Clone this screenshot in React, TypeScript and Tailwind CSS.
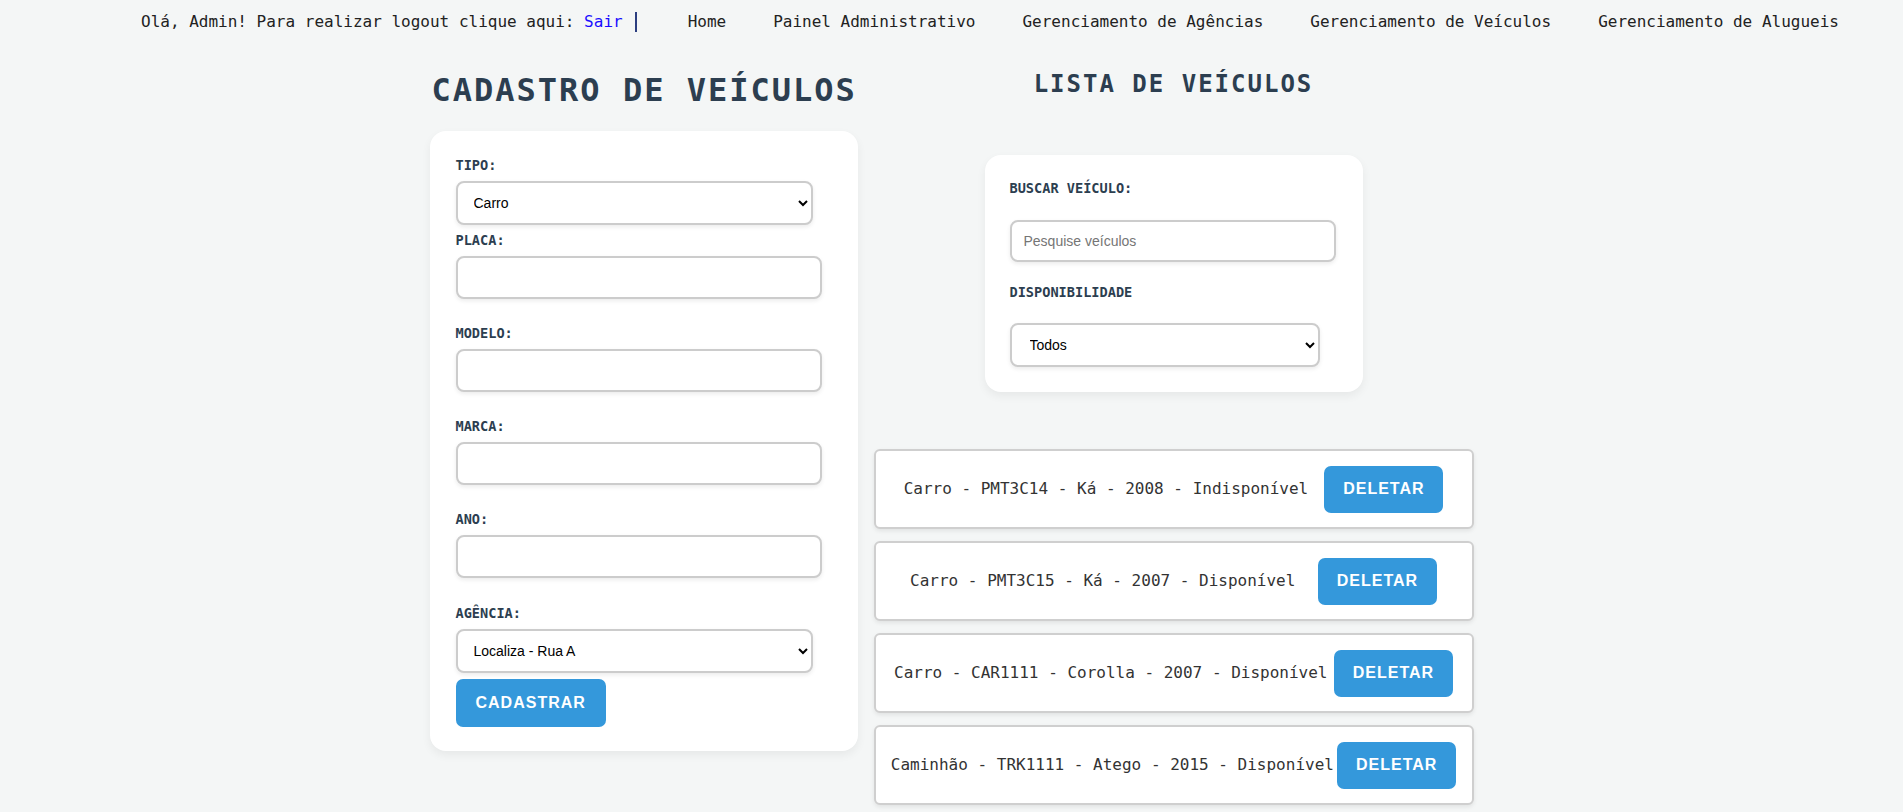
import React from "react";

const mono = "font-['DejaVu_Sans_Mono','Liberation_Mono',monospace]";
const sans = "font-['Liberation_Sans',Arial,sans-serif]";

const navLinks = ["Home", "Painel Administrativo", "Gerenciamento de Agências", "Gerenciamento de Veículos", "Gerenciamento de Alugueis"];

const veiculos = [
  "Carro - PMT3C14 - Ká - 2008 - Indisponível",
  "Carro - PMT3C15 - Ká - 2007 - Disponível",
  "Carro - CAR1111 - Corolla - 2007 - Disponível",
  "Caminhão - TRK1111 - Atego - 2015 - Disponível",
];

const labelCls = `${mono} block text-[13.6px] leading-4 font-bold text-[#2c3e50]`;
const boxCls = `${sans} block rounded-lg border-2 border-[#cccccc] bg-white text-[14px] text-black shadow-[0_2px_4px_rgba(0,0,0,0.08)] outline-none`;

function Field({ label, last }: { label: string; last?: boolean }) {
  return (
    <div className={last ? "" : "mb-[26px]"}>
      <label className={`${labelCls} mb-2`}>{label}</label>
      <input type="text" className={`${boxCls} h-[43px] w-[366px] px-3`} />
    </div>
  );
}

export default function App() {
  return (
    <div className={`${mono} min-h-[812px] bg-[#f4f6f6] text-[#222]`}>
      <nav className="flex h-[44px] items-center pl-[141px] text-[16px]">
        <span className="whitespace-pre">
          Olá, Admin! Para realizar logout clique aqui: <a className="text-[#1a0dff]">Sair</a>
        </span>
        <span className="ml-[12px] inline-block h-[20px] w-[2px] bg-[#2c3e80]"></span>
        <div className="ml-[51px] flex gap-[47px]">
          {navLinks.map((l) => (
            <a key={l} className="whitespace-nowrap text-[#222]">
              {l}
            </a>
          ))}
        </div>
      </nav>

      <main className="flex items-start justify-center gap-4 pt-[24px]">
        <section className="w-[428px]">
          <h1 className="mt-[2px] pl-[2px] text-[32px] leading-[40px] font-bold tracking-[2px] whitespace-nowrap text-[#2c3e50]">CADASTRO DE VEÍCULOS</h1>
          <div className="mt-[21px] rounded-2xl bg-white pt-[26px] pr-[25px] pb-[24px] pl-[26px] shadow-[0_4px_10px_rgba(0,0,0,0.06)]">
            <label className={`${labelCls} mb-2`}>TIPO:</label>
            <select className={`${boxCls} mb-[7px] h-[44px] w-[357px] pr-2 pl-[12px]`} defaultValue="Carro">
              <option>Carro</option>
              <option>Caminhão</option>
              <option>Moto</option>
            </select>
            <Field label="PLACA:" />
            <Field label="MODELO:" />
            <Field label="MARCA:" />
            <Field label="ANO:" last />
            <div className="mt-[27px]">
              <label className={`${labelCls} mb-2`}>AGÊNCIA:</label>
              <select className={`${boxCls} h-[44px] w-[357px] pr-2 pl-[12px]`} defaultValue="Localiza - Rua A">
                <option>Localiza - Rua A</option>
              </select>
            </div>
            <button className={`${sans} mt-[6px] h-[48px] rounded-[7px] bg-[#3498db] px-5 text-[16px] font-bold tracking-[1px] text-white`}>CADASTRAR</button>
          </div>
        </section>

        <section className="w-[600px]">
          <h2 className="text-center text-[24px] leading-[32px] font-bold tracking-[2px] text-[#2c3e50]">LISTA DE VEÍCULOS</h2>
          <div className="mx-auto mt-[55px] w-[378px] rounded-2xl bg-white px-[25px] pt-[25px] pb-[25px] shadow-[0_4px_10px_rgba(0,0,0,0.06)]">
            <label className={`${labelCls} mb-[24px]`}>BUSCAR VEÍCULO:</label>
            <input type="text" placeholder="Pesquise veículos" className={`${boxCls} h-[42px] w-[326px] px-3 placeholder:text-[#757575]`} />
            <label className={`${labelCls} mt-[22px] mb-[23px]`}>DISPONIBILIDADE</label>
            <select className={`${boxCls} h-[44px] w-[310px] pr-2 pl-[14px]`} defaultValue="Todos">
              <option>Todos</option>
              <option>Disponível</option>
              <option>Indisponível</option>
            </select>
          </div>

          <div className="mt-[57px] flex flex-col gap-[12px]">
            {veiculos.map((v) => (
              <div key={v} className="flex h-[80px] items-center justify-evenly rounded-md border-2 border-[#cfcfcf] bg-white px-3 shadow-[0_2px_4px_rgba(0,0,0,0.08)]">
                <span className="text-[16px] whitespace-nowrap text-[#333]">{v}</span>
                <button className={`${sans} h-[47px] w-[119px] shrink-0 rounded-[7px] bg-[#3498db] text-[16px] font-bold tracking-[1px] text-white`}>DELETAR</button>
              </div>
            ))}
          </div>
        </section>
      </main>
    </div>
  );
}
